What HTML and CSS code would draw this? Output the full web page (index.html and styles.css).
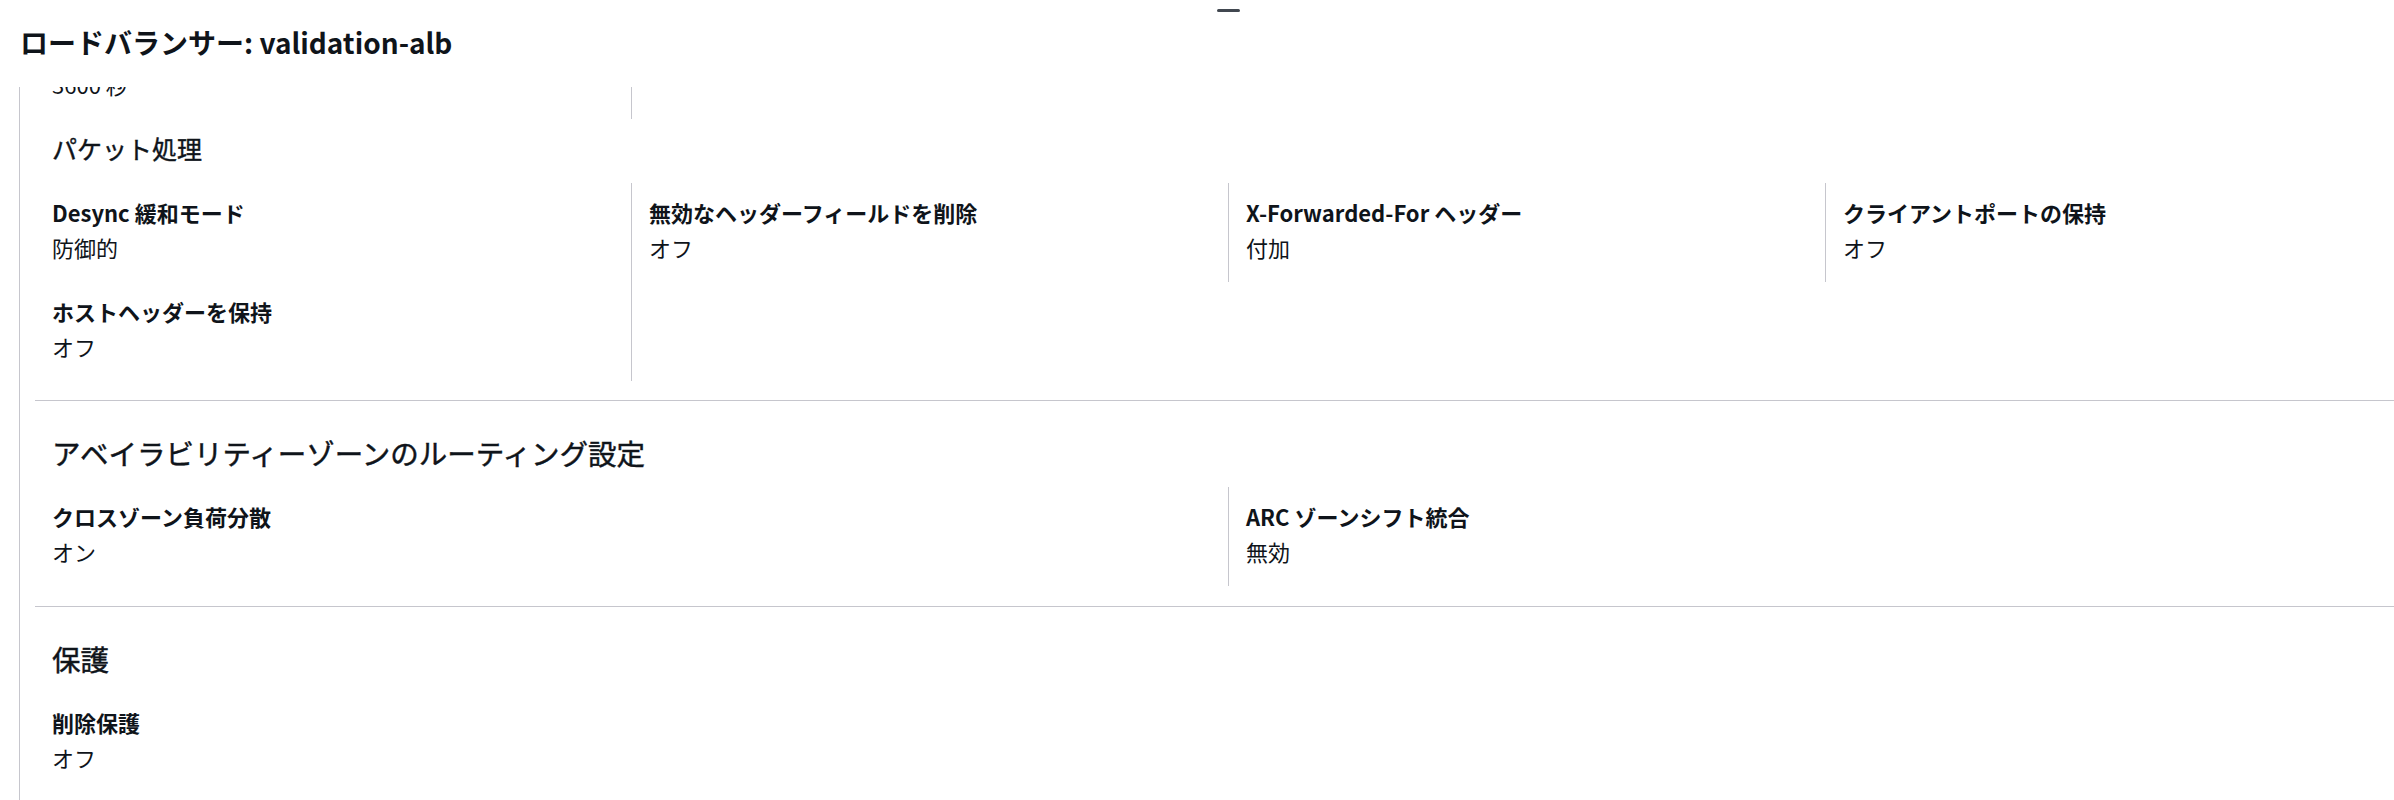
FILE: index.html
```html
<!DOCTYPE html>
<html lang="ja">
<head>
<meta charset="utf-8">
<title>ロードバランサー: validation-alb</title>
<link rel="stylesheet" href="styles.css">
</head>
<body>
<div class="handle"></div>
<header class="title-bar">
  <h1 class="title">ロードバランサー: validation-alb</h1>
</header>
<div class="viewport">
  <div class="panel">
    <section class="section first">
      <div class="grid cols-4 tail">
        <div class="item">
          <div class="label">&nbsp;</div>
          <div class="value">3600 秒</div>
        </div>
      </div>
      <h3 class="subheading">パケット処理</h3>
      <div class="grid cols-4">
        <div class="item">
          <div class="label">Desync 緩和モード</div>
          <div class="value">防御的</div>
        </div>
        <div class="item">
          <div class="label">無効なヘッダーフィールドを削除</div>
          <div class="value">オフ</div>
        </div>
        <div class="item">
          <div class="label">X-Forwarded-For ヘッダー</div>
          <div class="value">付加</div>
        </div>
        <div class="item">
          <div class="label">クライアントポートの保持</div>
          <div class="value">オフ</div>
        </div>
        <div class="item">
          <div class="label">ホストヘッダーを保持</div>
          <div class="value">オフ</div>
        </div>
      </div>
    </section>
    <section class="section">
      <h2 class="heading">アベイラビリティーゾーンのルーティング設定</h2>
      <div class="grid cols-2">
        <div class="item">
          <div class="label">クロスゾーン負荷分散</div>
          <div class="value">オン</div>
        </div>
        <div class="item">
          <div class="label">ARC ゾーンシフト統合</div>
          <div class="value">無効</div>
        </div>
      </div>
    </section>
    <section class="section">
      <h2 class="heading">保護</h2>
      <div class="grid cols-1">
        <div class="item">
          <div class="label">削除保護</div>
          <div class="value">オフ</div>
        </div>
      </div>
    </section>
  </div>
</div>
</body>
</html>
```

FILE: styles.css
```css
html, body {
  margin: 0;
  padding: 0;
  background: #ffffff;
}
body {
  width: 2394px;
  height: 800px;
  overflow: hidden;
  font-family: "Noto Sans CJK JP", "Noto Sans", sans-serif;
  color: #0f141a;
  position: relative;
}
.handle {
  position: absolute;
  top: 9px;
  left: 1217px;
  width: 23px;
  height: 3px;
  border-radius: 2px;
  background: #414750;
}
.title-bar {
  height: 87px;
  padding: 22px 0 0 20px;
  box-sizing: border-box;
}
.title {
  margin: 0;
  font-size: 28px;
  line-height: 40px;
  font-weight: 700;
  color: #0f141a;
  white-space: nowrap;
}
.viewport {
  height: 713px;
  overflow: hidden;
}
.panel {
  margin-left: 19px;
  border-left: 1px solid #c6c6cd;
  padding-left: 15px;
  min-height: 713px;
}
.section {
  border-top: 1px solid #c6c6cd;
  padding: 32px 0 20px 0;
}
.section.first {
  border-top: none;
  padding: 0 0 19px 0;
}
.heading {
  margin: 0 0 14px 0;
  padding-left: 17px;
  font-size: 28.5px;
  line-height: 40px;
  font-weight: 400;
  -webkit-text-stroke: 0.45px #0f141a;
  white-space: nowrap;
}
.subheading {
  margin: 11px 0 17px 0;
  padding-left: 17px;
  font-size: 25px;
  line-height: 36px;
  font-weight: 400;
  -webkit-text-stroke: 0.4px #0f141a;
  white-space: nowrap;
}
.grid {
  display: grid;
}
.cols-4 { grid-template-columns: repeat(4, 597px); }
.cols-2 { grid-template-columns: repeat(2, 1194px); }
.cols-1 { grid-template-columns: 2388px; }
.tail { margin-top: -67px; }
.item {
  padding: 12px 17px 18px 17px;
  border-right: 1px solid #c6c6cd;
  min-width: 0;
}
.label {
  font-size: 22px;
  line-height: 35px;
  font-weight: 700;
  white-space: nowrap;
}
.value {
  font-size: 22px;
  line-height: 34px;
  font-weight: 400;
  white-space: nowrap;
}
```
